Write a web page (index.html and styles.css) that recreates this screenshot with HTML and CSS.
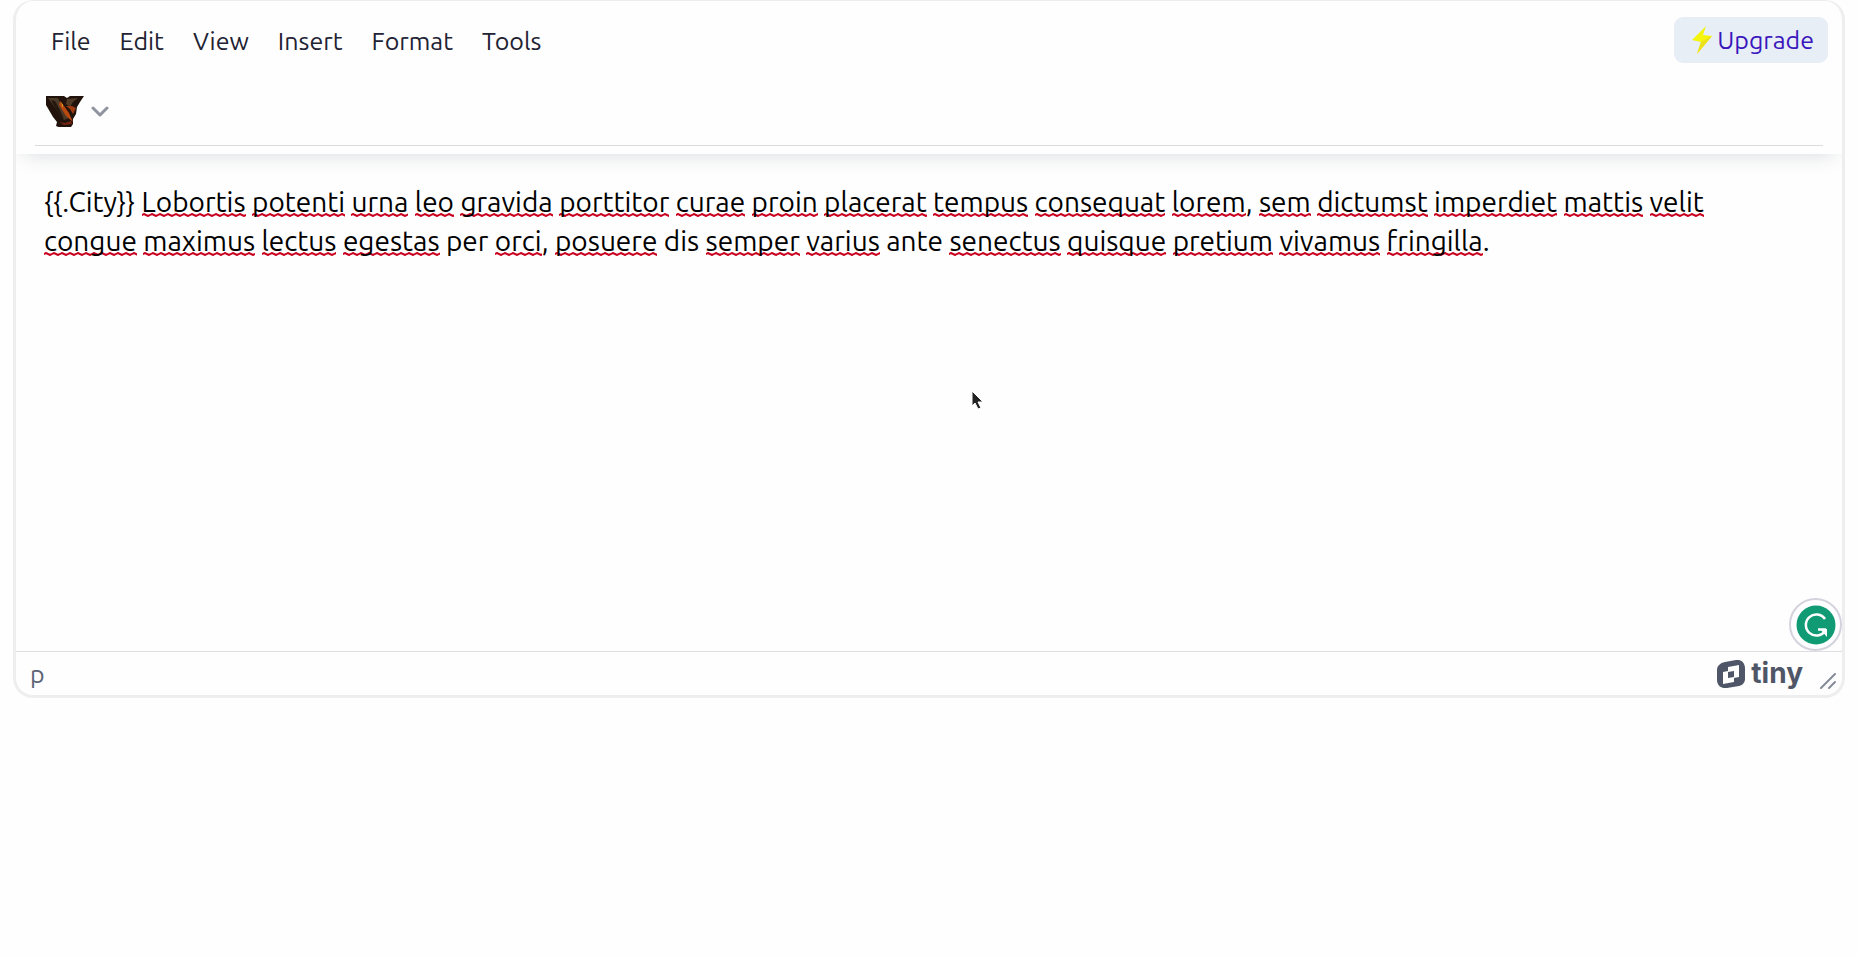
FILE: index.html
```html
<!DOCTYPE html>
<html lang="en">
<head>
<meta charset="utf-8">
<title>Editor</title>
<link rel="stylesheet" href="styles.css">
</head>
<body>
<main class="editor">
  <header class="editor-header">
    <div class="menu-row">
      <nav class="menubar" aria-label="Menu">
        <button type="button">File</button>
        <button type="button">Edit</button>
        <button type="button">View</button>
        <button type="button">Insert</button>
        <button type="button">Format</button>
        <button type="button">Tools</button>
      </nav>
      <a class="upgrade" href="#upgrade">
        <svg class="bolt" viewBox="0 0 20 28" aria-hidden="true"><path d="M14 0 0 14l9 2-4 12L20 10l-9-1z" fill="#f4f40c"/><path d="m9 16 11-6L5 28z" fill="#ece01a"/></svg>Upgrade</a>
    </div>
    <div class="toolbar">
      <button type="button" class="tool" aria-label="Insert variable">
        <svg class="tool-logo" viewBox="0 0 38 31" aria-hidden="true">
          <path d="M0 0h18l3 2 3-2h14l-2 3-2 3-3 5-1 7-3 5 0 5-2 3-10 1-5-2 1-4-4-5-7-12z" fill="#21130c"/>
          <path d="m2 2 10 0 3 6 8 14-5 2-6-8z" fill="#4c3a28"/>
          <path d="m5 4 4 1 5 9 4 9-5-4z" fill="#26180f"/>
          <path d="m14 5 4 5 5 7 4 9-7-6-7-11z" fill="#b8480f"/>
          <path d="m21 3 11-1-5 4-3 5-4-3z" fill="#503a26"/>
          <path d="m20 10 6 0 4 2-3 6-3-5z" fill="#9e3a10"/>
          <path d="m13 26 6 1 6-2 1 3-8 1z" fill="#74240f"/>
          <path d="m15 6 2 3v3z" fill="#edbc29"/>
        </svg>
        <svg class="chevron" viewBox="0 0 18 12" aria-hidden="true"><path d="m2 2 7 7 7-7" fill="none" stroke="#8e939e" stroke-width="3" stroke-linecap="round" stroke-linejoin="round"/></svg>
      </button>
    </div>
  </header>
  <section class="content">
    <p>{{.City}} <u>Lobortis</u> <u>potenti</u> <u>urna</u> <u>leo</u> <u>gravida</u> <u>porttitor</u> <u>curae</u> <u>proin</u> <u>placerat</u> <u>tempus</u> <u>consequat</u> <u>lorem</u>, <u>sem</u> <u>dictumst</u> <u>imperdiet</u> <u>mattis</u> <u>velit</u> <u>congue</u> <u>maximus</u> <u>lectus</u> <u>egestas</u> per <u>orci</u>, <u>posuere</u> dis <u>semper</u> <u>varius</u> ante <u>senectus</u> <u>quisque</u> <u>pretium</u> <u>vivamus</u> <u>fringilla</u>.</p>
    <svg class="pointer" viewBox="0 0 14 20" aria-hidden="true"><path d="M1 1v15l3-3 3 6 3-1-3-6h5z" fill="#222" stroke="#fff" stroke-width="1"/></svg>
    <button type="button" class="grammar" aria-label="Check writing">
      <svg viewBox="0 0 40 40" aria-hidden="true"><circle cx="20" cy="20" r="19.500" fill="#109b74"/><path d="M29 14A10.500 10.500 0 1 0 29 26M22 24.500H30" fill="none" stroke="#fff" stroke-width="2.500"/><path d="M24 24h7v8z" fill="#fff"/></svg>
    </button>
  </section>
  <footer class="statusbar">
    <button type="button" class="path">p</button>
    <div class="status-right">
      <a class="brand" href="#tiny" aria-label="tiny">
        <svg class="brand-mark" viewBox="0 0 28 28" aria-hidden="true"><path fill="#4e5668" fill-rule="evenodd" d="M8 2 19 0c5-1 9 3 9 8v11c0 3-2 6-6 7l-12 2c-6 1-10-3-10-8V10c0-4 3-7 8-8zM11 7v4l-5 1v12l11-2v-4l5-1V5zm0 5 6-1v6l-6 1z"/></svg>
        <span>tiny</span>
      </a>
      <svg class="resize" viewBox="0 0 16 16" aria-hidden="true"><path d="M1 15 15 1M9 15l6-6" fill="none" stroke="#868b97" stroke-width="2" stroke-linecap="round"/></svg>
    </div>
  </footer>
</main>
</body>
</html>
```
FILE: styles.css
```css
* { box-sizing: border-box; }
body {
  margin: 0;
  padding: 0 13px;
  background: #fefefe;
  color: #222f3e;
  font-family: Ubuntu, "Noto Sans", sans-serif;
}
button {
  margin: 0;
  padding: 0;
  border: 0;
  background: none;
  color: inherit;
  font: inherit;
}
a { text-decoration: none; }
svg { display: block; flex: none; }
.editor {
  display: flex;
  flex-direction: column;
  border: 3px solid #eee;
  border-top-width: 1px;
  border-radius: 20px;
  overflow: hidden;
}
.editor-header {
  position: relative;
  padding: 8px 19px 8px;
  box-shadow: 0 8px 20px -8px rgba(34, 47, 62, 0.18);
}
.menu-row {
  display: flex;
  align-items: center;
  justify-content: space-between;
  height: 62px;
  margin-right: -5px;
}
.menubar {
  display: flex;
  gap: 13px;
  padding-left: 8px;
}
.menubar button {
  padding: 2px 8px 0;
  font-size: 25px;
  line-height: 40px;
  color: #222233;
}
.upgrade {
  display: flex;
  align-items: center;
  gap: 5px;
  height: 46px;
  padding: 0 14px 0 18px;
  border-radius: 9px;
  background: #e7eef5;
  color: #3a16bd;
  font-size: 25px;
}
.bolt { width: 20px; height: 28px; }
.toolbar {
  display: flex;
  align-items: center;
  height: 75px;
  padding: 7px 0 0 11px;
  border-bottom: 1px solid #dcdcdc;
}
.tool {
  display: flex;
  align-items: center;
  gap: 7px;
}
.tool-logo { width: 38px; height: 31px; }
.chevron { width: 18px; height: 12px; }
.content {
  position: relative;
  height: 497px;
  padding: 28px 64px 28px 28px;
  color: #000;
  font-size: 28px;
  line-height: 39px;
}
.content p { margin: 0; }
.content u {
  text-decoration: none;
  background: url("data:image/svg+xml,%3Csvg xmlns='http://www.w3.org/2000/svg' width='8' height='4'%3E%3Cpath d='M-2 3 2 1 6 3 10 1' fill='none' stroke='%23c8001e' stroke-width='2'/%3E%3C/svg%3E") left bottom / 8px 4px repeat-x;
}
.pointer {
  position: absolute;
  top: 236px;
  left: 52%;
  width: 14px;
  height: 20px;
  margin-left: 5px;
}
.grammar {
  position: absolute;
  right: 0;
  bottom: 0;
  display: grid;
  place-items: center;
  width: 53px;
  height: 53px;
  border: 2px solid #d3d3de;
  border-radius: 50%;
  background: #fff;
}
.grammar svg { width: 40px; height: 40px; }
.statusbar {
  display: flex;
  align-items: center;
  justify-content: space-between;
  height: 44px;
  padding: 0 6px 0 14px;
  border-top: 1px solid #dedee0;
  color: #5c6374;
}
.path { font-size: 25px; line-height: 40px; }
.status-right { display: flex; align-items: center; gap: 17px; height: 100%; }
.brand {
  display: flex;
  align-items: center;
  gap: 6px;
  color: #4e5668;
  font: bold 28px/36px Inter, sans-serif;
}
.brand span { padding-bottom: 2px; }
.brand-mark { width: 28px; height: 28px; }
.resize { width: 16px; height: 16px; align-self: flex-end; margin-bottom: 6px; }
```
